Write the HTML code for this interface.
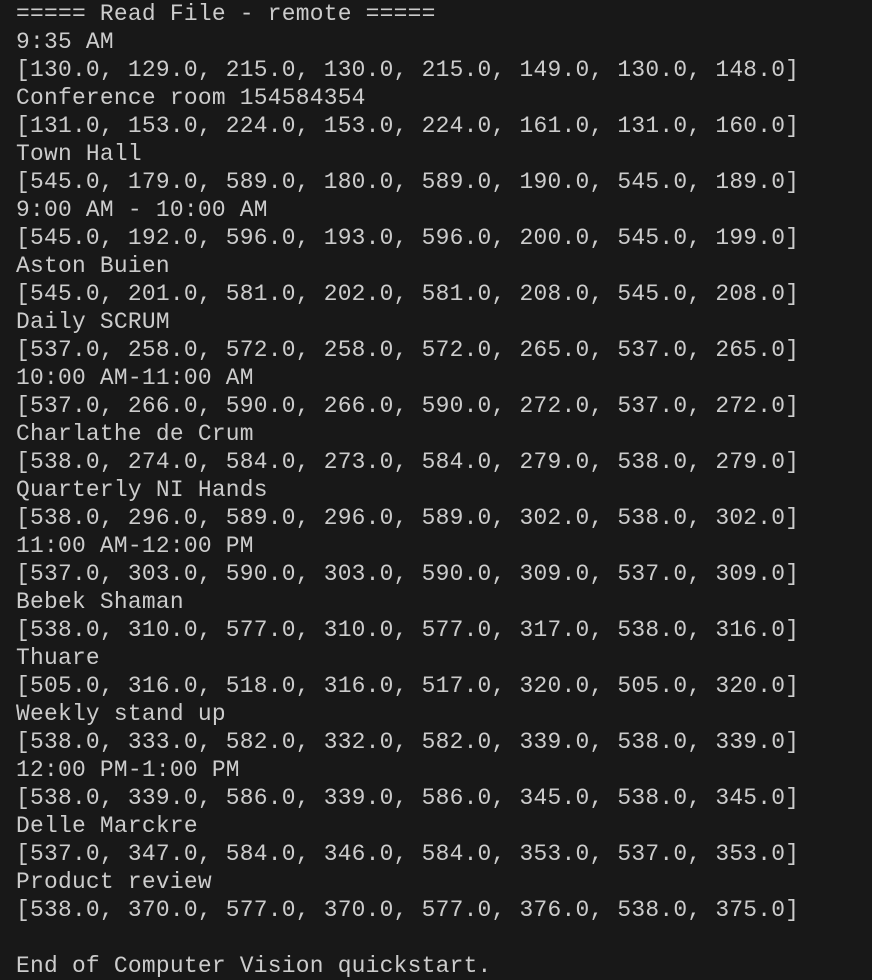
<!DOCTYPE html>
<html><head><meta charset="utf-8"><style>
html,body{margin:0;padding:0;background:#181818;width:872px;height:980px;overflow:hidden}
pre{margin:0;padding:0 0 0 16px;font-family:"Liberation Mono","DejaVu Sans Mono",monospace;font-size:22.9px;letter-spacing:0.25px;line-height:28px;color:#cccccc;white-space:pre}
</style></head><body><pre>===== Read File - remote =====
9:35 AM
[130.0, 129.0, 215.0, 130.0, 215.0, 149.0, 130.0, 148.0]
Conference room 154584354
[131.0, 153.0, 224.0, 153.0, 224.0, 161.0, 131.0, 160.0]
Town Hall
[545.0, 179.0, 589.0, 180.0, 589.0, 190.0, 545.0, 189.0]
9:00 AM - 10:00 AM
[545.0, 192.0, 596.0, 193.0, 596.0, 200.0, 545.0, 199.0]
Aston Buien
[545.0, 201.0, 581.0, 202.0, 581.0, 208.0, 545.0, 208.0]
Daily SCRUM
[537.0, 258.0, 572.0, 258.0, 572.0, 265.0, 537.0, 265.0]
10:00 AM-11:00 AM
[537.0, 266.0, 590.0, 266.0, 590.0, 272.0, 537.0, 272.0]
Charlathe de Crum
[538.0, 274.0, 584.0, 273.0, 584.0, 279.0, 538.0, 279.0]
Quarterly NI Hands
[538.0, 296.0, 589.0, 296.0, 589.0, 302.0, 538.0, 302.0]
11:00 AM-12:00 PM
[537.0, 303.0, 590.0, 303.0, 590.0, 309.0, 537.0, 309.0]
Bebek Shaman
[538.0, 310.0, 577.0, 310.0, 577.0, 317.0, 538.0, 316.0]
Thuare
[505.0, 316.0, 518.0, 316.0, 517.0, 320.0, 505.0, 320.0]
Weekly stand up
[538.0, 333.0, 582.0, 332.0, 582.0, 339.0, 538.0, 339.0]
12:00 PM-1:00 PM
[538.0, 339.0, 586.0, 339.0, 586.0, 345.0, 538.0, 345.0]
Delle Marckre
[537.0, 347.0, 584.0, 346.0, 584.0, 353.0, 537.0, 353.0]
Product review
[538.0, 370.0, 577.0, 370.0, 577.0, 376.0, 538.0, 375.0]

End of Computer Vision quickstart.</pre></body></html>
